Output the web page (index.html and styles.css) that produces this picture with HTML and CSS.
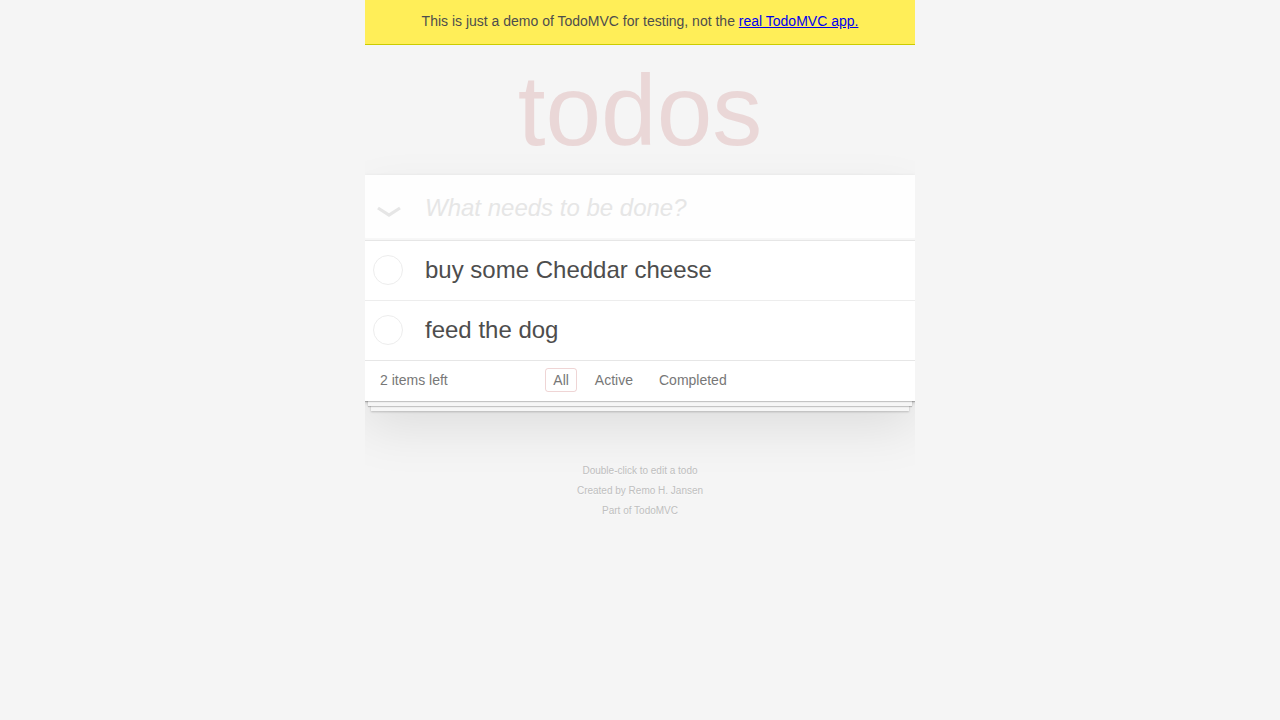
FILE: index.html
```html
<!DOCTYPE html>
<html lang="en">
<head>
<meta charset="utf-8">
<title>TodoMVC</title>
<link rel="stylesheet" href="styles.css">
</head>
<body>
<div class="banner">This is just a demo of TodoMVC for testing, not the <a href="#">real TodoMVC app.</a></div>
<div class="title-area"><h1 class="title">todos</h1></div>
<section class="todoapp">
  <header class="header">
    <span class="toggle-all" aria-label="Mark all as complete">
      <svg width="26" height="14" viewBox="0 0 26 14"><polyline points="2,3 13,10 24,3" fill="none" stroke="#e6e6e6" stroke-width="3.2" stroke-linejoin="miter"/></svg>
    </span>
    <input class="new-todo" placeholder="What needs to be done?">
  </header>
  <ul class="todo-list">
    <li class="todo-item"><span class="toggle"></span><label class="todo-label">buy some Cheddar cheese</label></li>
    <li class="todo-item"><span class="toggle"></span><label class="todo-label">feed the dog</label></li>
  </ul>
  <footer class="footer">
    <span class="todo-count"><strong class="count-num">2</strong> items left</span>
    <ul class="filters">
      <li><a class="filter selected" href="#">All</a></li>
      <li><a class="filter" href="#">Active</a></li>
      <li><a class="filter" href="#">Completed</a></li>
    </ul>
    <span></span>
  </footer>
</section>
<footer class="info">
  <p>Double-click to edit a todo</p>
  <p>Created by <a href="#">Remo H. Jansen</a></p>
  <p>Part of <a href="#">TodoMVC</a></p>
</footer>
</body>
</html>
```

FILE: styles.css
```css
* { box-sizing: border-box; }
html, body { margin: 0; padding: 0; }
body {
  font: 14px "Liberation Sans", Arial, Helvetica, sans-serif;
  line-height: 1.4em;
  background: #f5f5f5;
  color: #4d4d4d;
  max-width: 550px;
  margin: 0 auto;
}
.banner {
  background: #ffee58;
  border-bottom: 1px solid #cccc00;
  text-align: center;
  padding: 11px 0 13px;
  line-height: 20px;
  height: 45px;
  color: #4d4d4d;
}
.banner a { color: #0000ee; text-decoration: underline; }
.title-area { height: 130px; padding-top: 15px; }
.title {
  margin: 0;
  font-size: 100px;
  line-height: 100px;
  font-weight: 100;
  text-align: center;
  color: rgba(175, 47, 47, 0.15);
}
.todoapp {
  background: #fff;
  margin: 0 0 40px 0;
  position: relative;
  box-shadow: 0 2px 4px 0 rgba(0,0,0,0.2), 0 25px 50px 0 rgba(0,0,0,0.1);
}
.header {
  display: flex;
  align-items: stretch;
  height: 65px;
  background: rgba(0,0,0,0.003);
  box-shadow: inset 0 -2px 1px rgba(0,0,0,0.03);
}
.toggle-all {
  width: 60px;
  flex: none;
  display: flex;
  align-items: flex-start;
  justify-content: center;
  padding-top: 30px;
  padding-right: 12px;
}
.toggle-all svg { display: block; }
.new-todo {
  flex: 1;
  min-width: 0;
  margin: 0;
  border: none;
  outline: none;
  background: transparent;
  font: 24px "Liberation Sans", Arial, sans-serif;
  line-height: 1.4em;
  color: #4d4d4d;
  padding: 16px 16px 16px 0;
}
.new-todo::placeholder { font-style: italic; color: #e6e6e6; }
.todo-list {
  margin: 0;
  padding: 0;
  list-style: none;
  border-top: 1px solid #e6e6e6;
}
.todo-item {
  display: flex;
  align-items: center;
  border-bottom: 1px solid #ededed;
  font-size: 24px;
}
.todo-item:last-child { border-bottom: none; }
.toggle {
  flex: none;
  width: 30px;
  height: 30px;
  margin-left: 8px;
  margin-right: 22px;
  border: 1px solid #ededed;
  border-radius: 50%;
}
.todo-label {
  flex: 1;
  padding: 15px 15px 15px 0;
  line-height: 1.2;
  color: #4d4d4d;
}
.footer {
  display: grid;
  grid-template-columns: 1fr auto 1fr;
  grid-template-rows: 20px;
  align-items: center;
  color: #777;
  padding: 9px 15px 11px;
  height: 41px;
  border-top: 1px solid #e6e6e6;
  box-shadow: 0 1px 1px rgba(0,0,0,0.2),
              0 8px 0 -3px #f6f6f6,
              0 9px 1px -3px rgba(0,0,0,0.2),
              0 16px 0 -6px #f6f6f6,
              0 17px 2px -6px rgba(0,0,0,0.2);
}
.todo-count { text-align: left; line-height: 20px; }
.count-num { font-weight: normal; }
.filters {
  margin: -5px 0;
  padding: 0;
  list-style: none;
  display: flex;
  gap: 4px;
}
.filter {
  display: block;
  margin: 3px;
  padding: 3px 7px;
  line-height: 16px;
  color: inherit;
  text-decoration: none;
  border: 1px solid transparent;
  border-radius: 3px;
}
.filter.selected { border-color: rgba(175, 47, 47, 0.2); }
.info {
  margin: 65px auto 0;
  color: #bfbfbf;
  font-size: 10px;
  text-shadow: 0 1px 0 rgba(255,255,255,0.5);
  text-align: center;
}
.info p { line-height: 1; margin: 10px 0; }
.info a { color: inherit; text-decoration: none; }
```
